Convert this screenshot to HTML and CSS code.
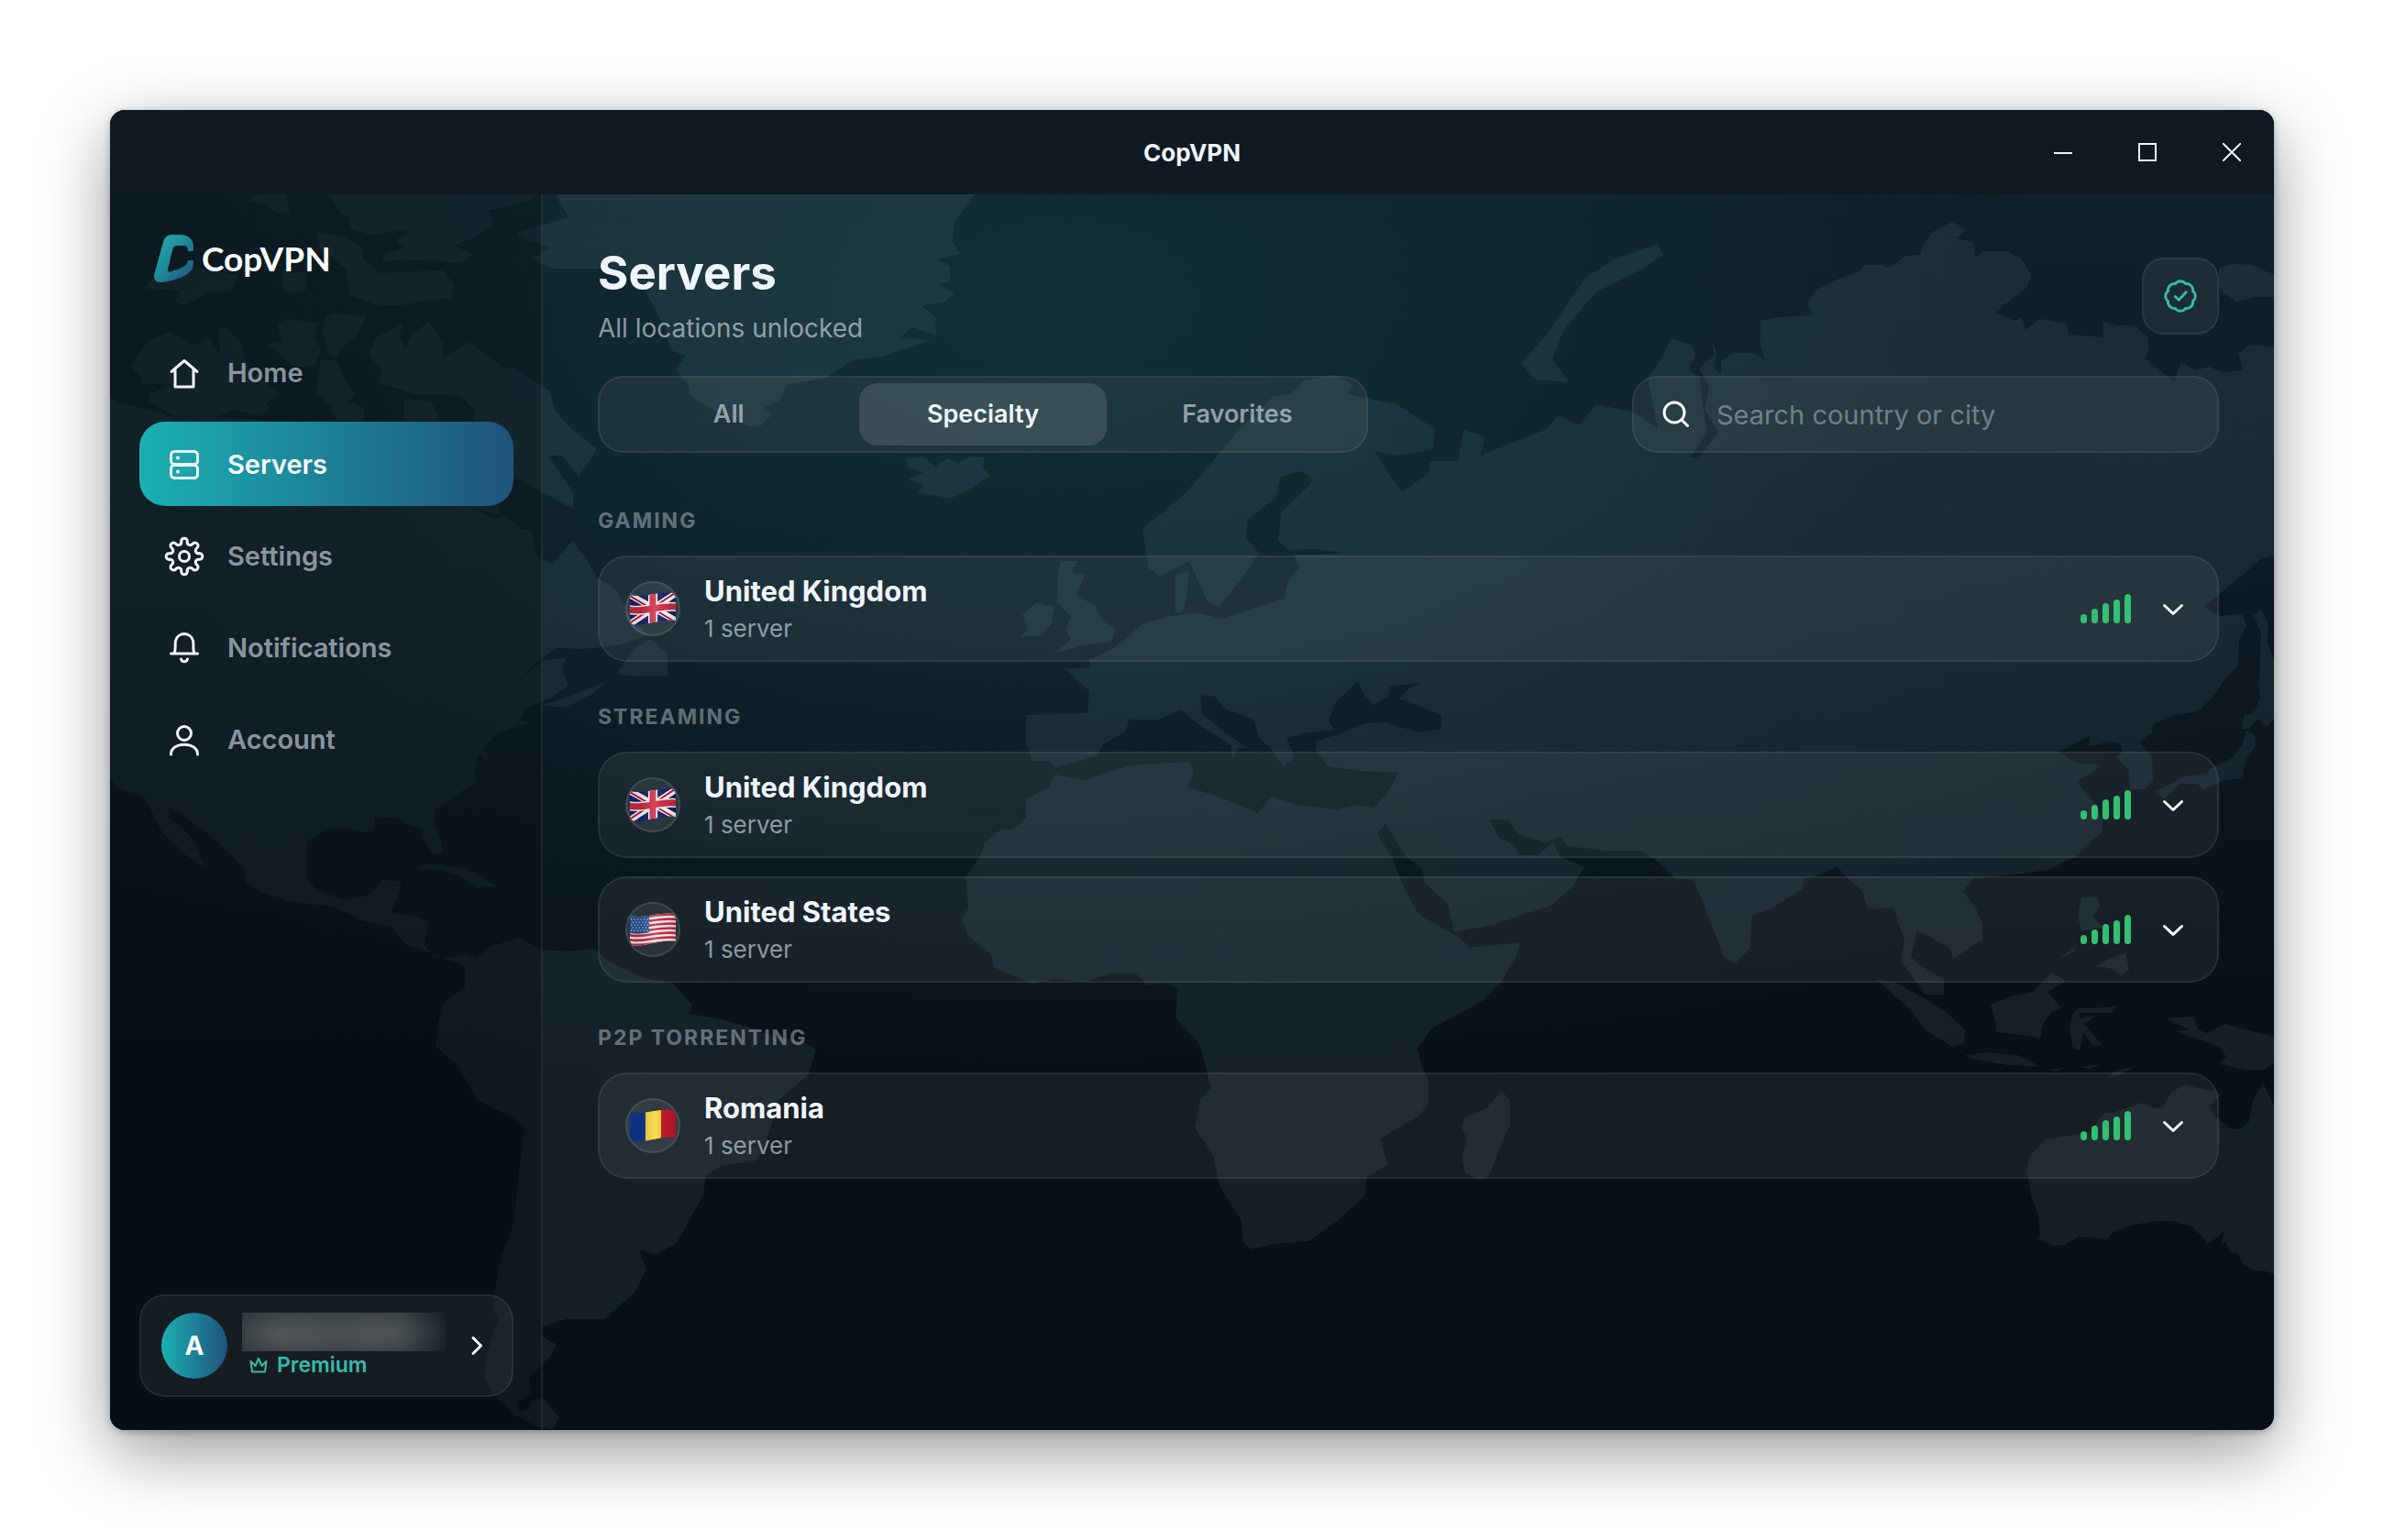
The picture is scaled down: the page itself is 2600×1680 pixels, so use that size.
FILE: index.html
```html
<!DOCTYPE html>
<html lang="en">
<head>
<meta charset="utf-8">
<title>CopVPN</title>
<link rel="stylesheet" href="styles.css">
</head>
<body>
<svg class="sprite" aria-hidden="true">
  <defs>
    <linearGradient id="brand" x1="0" y1="0" x2="1" y2="1"><stop offset="0" stop-color="#20b5b5"/><stop offset=".45" stop-color="#1f8c9b"/><stop offset="1" stop-color="#1f4f7a"/></linearGradient>
    <linearGradient id="fold" x1="0" y1="0" x2="1" y2="0"><stop offset="0" stop-color="#000" stop-opacity=".12"/><stop offset=".25" stop-color="#000" stop-opacity=".14"/><stop offset=".55" stop-color="#fff" stop-opacity=".14"/><stop offset=".8" stop-color="#000" stop-opacity=".04"/><stop offset="1" stop-color="#000" stop-opacity=".16"/></linearGradient>
    <clipPath id="cloth"><path d="M0 4C14 8 32-1 50 2V32C34 29 16 39 0 36Z"/></clipPath>
    <path id="wave" d="M-1 4C14 8 32-1 51 2"/>
    <path id="tooth" d="M-3.22-16.18C-3.8-21 3.8-21 3.22-16.18C2.79-12.57 6.92-10.86 9.16-13.72"/>
    <path id="scallop" d="M-5.9-14.2A7.4 7.4 0 0 1 5.9-14.2"/>
  </defs>
  <symbol id="flag-gb" viewBox="0 0 50 38">
    <g clip-path="url(#cloth)">
      <path fill="#12246f" d="M0 0H50V38H0Z"/>
      <path stroke="#fff" stroke-width="7" d="M-2 3 52 33M-2 37 52 1"/>
      <path stroke="#c8102e" stroke-width="2" d="M-2 4 25 20M52 35 25 19M-2 36 25 18M52 0 25 18"/>
      <g fill="none" stroke="#fff" stroke-width="10"><path d="M25 0V38"/><path d="M-1 20C14 24 32 15 51 17"/></g>
      <g fill="none" stroke="#d22b45" stroke-width="7"><path d="M25 0V38"/><path d="M-1 20C14 24 32 15 51 17"/></g>
      <path fill="url(#fold)" d="M0 0H50V38H0Z"/>
    </g>
  </symbol>
  <symbol id="flag-us" viewBox="0 0 50 38">
    <g clip-path="url(#cloth)">
      <path fill="#f4f4f6" d="M0 0H50V38H0Z"/>
      <g fill="none" stroke="#c9283c" stroke-width="2.6">
        <use href="#wave" y="1"/><use href="#wave" y="6"/><use href="#wave" y="11"/><use href="#wave" y="16"/><use href="#wave" y="21"/><use href="#wave" y="26"/><use href="#wave" y="31"/>
      </g>
      <path fill="#2b5797" d="M0 0H21V22C14 24 7 24 0 23Z"/>
      <g fill="none" stroke="#a9c3e2" stroke-width="1.3" stroke-dasharray="1.3 2.2"><path d="M1 8H21M2.7 11H21M1 14H21M2.7 17H21M1 20H21"/></g>
      <path fill="url(#fold)" d="M0 0H50V38H0Z"/>
    </g>
  </symbol>
  <symbol id="flag-ro" viewBox="0 0 50 38">
    <g clip-path="url(#cloth)">
      <path fill="#0f3a94" d="M0 0H17V38H0Z"/><path fill="#fbd936" d="M17 0H34V38H17Z"/><path fill="#c4182d" d="M34 0H50V38H34Z"/>
      <path fill="url(#fold)" d="M0 0H50V38H0Z"/>
    </g>
  </symbol>
  <symbol id="chevron-down" viewBox="0 0 36 36"><path d="M8.500 14.500 18 23.500 27.500 14.500" fill="none" stroke="currentColor" stroke-width="3" stroke-linecap="round" stroke-linejoin="round"/></symbol>
</svg>

<div class="window">
  <header class="titlebar">
    <span class="titlebar-name">CopVPN</span>
    <div class="window-controls">
      <button type="button" aria-label="Minimize"><svg viewBox="0 0 20 20"><path d="M0 11H20"/></svg></button>
      <button type="button" aria-label="Maximize"><svg viewBox="0 0 20 20"><path d="M1 1H19V19H1Z"/></svg></button>
      <button type="button" aria-label="Close"><svg viewBox="0 0 20 20"><path d="M0 0 20 20M20 0 0 20"/></svg></button>
    </div>
  </header>

  <div class="body">
    <svg class="world" viewBox="120 212 2360 1348" preserveAspectRatio="xMidYMid slice" aria-hidden="true">
      <!-- North and South America -->
      <path d="M120 433 132 440 177 450 195 458 243 455 277 457 380 475 480 470 540 530 545 562 508 552 508 560 513 593 505 608 518 623 520 637 512 647 493 657 502 679 492 697 480 688 472 673 470 657 447 656 427 648 403 636 381 636 375 610 363 603 362 587 378 560 400 535 430 500 480 490 508 552 540 566 553 563 567 577 580 578 585 607 602 616 613 603 620 595 625 590 640 610 651 630 672 643 687 673 707 693 678 703 637 708 607 707 587 720 567 742 593 720 617 718 613 730 620 748 603 760 573 773 568 785 578 788 543 800 525 818 533 822 530 830 522 822 518 840 520 853 493 870 475 883 473 897 482 920 482 930 473 932 460 913 462 904 440 898 433 892 409 892 408 905 397 908 370 902 350 908 335 918 334 957 347 972 377 982 403 976 417 960 438 961 432 982 427 996 450 998 467 1005 463 1031 473 1044 490 1045 507 1041 520 1045 533 1033 567 1023 590 1036 620 1038 648 1035 664 1049 702 1067 733 1072 755 1097 751 1106 777 1110 809 1118 840 1129 876 1136 890 1145 882 1172 849 1200 842 1225 831 1258 822 1267 786 1272 769 1284 768 1302 738 1356 716 1368 697 1363 705 1385 693 1409 660 1439 617 1439 592 1447 590 1457 607 1467 600 1480 577 1503 580 1520 563 1530 567 1540 577 1537 580 1527 593 1525 610 1547 602 1559 587 1557 560 1543 540 1523 528 1503 532 1473 543 1440 537 1423 545 1380 547 1370 560 1335 567 1271 572 1232 560 1220 520 1200 500 1163 475 1141 478 1114 483 1095 507 1077 507 1053 490 1048 460 1036 443 1031 427 1011 397 1005 363 989 320 984 287 974 268 962 267 947 237 918 198 888 184 881 184 893 198 903 212 918 223 946 203 933 177 908 157 869 127 859 120 848Z"/>
      <path d="M710 697 693 707 672 735 693 738 728 737 728 713ZM590 769 612 763 640 752 661 744 648 756 617 772ZM450 950 467 942 507 947 543 967 520 968 503 956 473 947Z"/>
      <!-- Arctic islands -->
      <path d="M267 219 283 212H312L317 233 300 232 287 222ZM358 212H582L580 218 532 230 538 243 520 258 495 268 517 277 503 287 463 283 418 285V278L440 270 432 262 448 252 427 252 407 257 383 250 380 237 372 233ZM345 253 370 257 393 267 397 283 413 298 483 295 495 310 492 325 460 328 440 333H413L382 323 377 293 350 273ZM156 315 173 297 200 290 260 300 253 317 227 320 200 333 190 328 197 317ZM308 297H335L333 317 320 321 308 315ZM302 353 313 348 347 352 342 370 350 380 343 400 320 400 292 375 308 372ZM355 345 367 341 400 346 387 368 377 375 367 390 357 385 352 360ZM350 392 367 393 377 417 387 430 380 438 397 445V459H367L360 443 345 427ZM440 435 470 438 480 459H440ZM143 400 160 373 185 362 213 377 227 367 240 387 238 360 245 357 263 373 268 397 293 420 305 430 290 440 295 448 283 454 257 447 230 457 197 458 163 438V430L187 420 153 418 155 412ZM403 387 410 367 440 353 435 367 442 380 450 363 468 352 483 373V390L512 373 547 400 563 403 600 427 605 447 620 465 651 490 631 520 613 497 598 497 625 537V555L597 540 560 520 530 470 515 457 520 450 503 432 453 430 410 417 418 407Z"/>
      <path d="M608 212H1063L1042 240 1038 263 1048 277 1021 283 1036 290V307L1024 310 1041 320 1030 330 1004 333 1020 345 1021 366 995 357 982 368 1015 371 965 388 930 393 901 412 857 420 851 437 833 443 841 453 828 466 816 465 778 447 753 432 751 420 737 403 748 388 731 382 725 357 704 318 678 293H603L580 282 600 270 568 260 563 255 620 237 608 217ZM989 500 1007 498 1020 509 1033 500 1045 505 1059 498 1074 499 1072 510 1080 519 1059 533 1036 544 1000 537 1008 530 991 523 1007 515 989 509Z"/>
      <!-- British Isles and Denmark -->
      <path d="M1156 612H1175L1168 625 1183 627 1174 650 1194 660 1200 673 1217 687 1212 700 1177 705 1150 713 1168 697 1162 687 1168 673 1153 657V640ZM1130 658 1150 662 1147 680 1136 693 1112 695 1121 687 1115 670ZM1282 627 1297 623 1294 650 1290 668H1282Z"/>
      <!-- Europe, Asia and Africa -->
      <path d="M1455 409 1476 420 1470 430 1523 441 1565 468 1563 490 1523 497 1499 492 1517 521 1529 537 1559 515V503H1590L1596 468 1620 477 1614 497 1687 468 1699 454 1723 463 1741 441 1783 450 1808 468 1797 412 1812 391 1822 370 1844 375 1849 387 1842 404 1854 412 1857 442 1862 471 1844 499H1853L1874 471 1859 446 1864 422 1853 402 1869 387 1867 370 1872 385 1870 402 1877 408V393L1892 385H1912L1925 393 1920 377V350L1939 346 1977 344 1971 330 1981 316 2006 304 2027 297 2033 289H2051L2061 292 2078 279 2094 278 2098 265 2108 253 2129 242 2144 251 2133 260 2152 264 2154 281 2164 274H2190L2205 283 2215 300 2210 314 2175 341 2197 350 2205 346 2209 360 2225 348 2254 353 2256 365 2294 368V351L2309 355H2327L2342 367 2344 381 2339 391 2371 416 2379 395 2394 404 2409 400 2424 406 2446 404 2441 385 2454 376 2480 379V606L2466 610 2404 662 2421 672 2446 669 2450 683 2442 699 2441 726 2424 744 2414 760 2397 776 2373 780 2348 790 2347 799 2333 809 2347 826 2348 851 2340 861H2322V840L2308 826 2315 820 2312 811 2300 809 2278 815 2280 802 2245 820 2263 832 2292 835 2265 853 2283 874 2293 893 2292 908 2263 935 2233 949 2180 956 2153 958 2141 972 2155 991 2162 1008V1025L2130 1046 2127 1035 2100 1019 2091 1015 2084 1044 2100 1057 2120 1068V1085H2100L2085 1065 2073 1048 2077 1026 2065 990 2037 992 2031 972 2014 957 2003 945 1986 954 1968 959 1965 970 1933 990 1911 999 1908 1035 1892 1052 1880 1044 1863 999 1847 959H1828L1807 939 1789 928H1751L1709 923 1702 913 1684 919 1656 910 1645 894H1624L1635 914 1652 923 1656 933H1677L1694 919 1701 934 1728 946 1714 968 1691 988 1631 1008 1586 1017 1579 986 1554 963 1551 948 1533 934 1511 898 1502 910 1519 937 1531 968 1547 997 1593 1024 1603 1034 1658 1028 1652 1046 1638 1070 1617 1092 1561 1122 1546 1144 1551 1164 1558 1178V1204L1547 1218 1505 1242 1514 1271 1491 1283 1488 1305 1456 1334 1428 1354 1389 1357 1365 1363 1356 1356 1354 1332 1330 1294 1323 1260 1303 1231 1309 1200 1321 1187 1316 1169 1309 1140 1282 1111 1284 1079 1270 1072 1251 1075 1239 1062H1210L1182 1071 1151 1068 1126 1073 1084 1055 1081 1041 1056 1021 1049 1004 1056 990 1053 957 1070 932 1074 919 1091 905H1105L1119 892V872L1144 858 1151 845 1182 851 1231 835 1298 831 1302 843 1295 858 1337 872 1372 887 1386 869 1414 878 1459 883 1477 878 1498 881 1512 867 1525 843 1484 841 1449 836 1435 820V809L1462 800 1488 789 1512 788 1547 799 1572 795V780L1526 762 1537 751 1552 744 1516 749 1514 760 1498 769 1488 758 1481 743 1456 767 1449 787 1456 796 1421 800 1403 805 1412 825 1400 837 1388 820 1372 803 1368 785 1337 774 1326 760 1309 758 1312 780 1337 800 1361 816 1350 816 1344 829 1342 812 1302 787 1288 774 1263 785H1231L1228 798 1203 812 1196 825 1151 837 1144 830H1126L1119 812V780L1186 778 1188 754 1160 729 1188 728V720L1215 707 1247 680 1273 673 1303 668 1332 675 1370 663 1400 653 1405 633 1417 620 1411 605H1435L1464 603 1435 599 1405 600 1394 590 1397 560 1430 527V520L1417 514 1397 520 1391 543 1361 567 1359 587 1373 603 1353 633 1329 662 1317 657 1297 612 1265 628 1253 620 1246 577 1294 537 1353 467 1388 433 1408 430 1423 415Z"/>
      <path d="M1659 396 1687 365 1729 303 1762 282 1808 266 1814 278 1790 294 1741 318 1705 361 1693 392 1711 417 1674 414ZM2420 292 2436 288 2456 289 2480 300V324H2461L2438 329 2420 314ZM2466 665 2474 680 2472 700 2480 720V740L2472 752 2464 748 2466 691 2458 671ZM2463 740H2480V784L2472 793 2462 784 2453 795H2445L2447 780 2458 778 2465 761ZM2450 797 2459 801 2460 813 2450 828 2445 849 2423 852 2403 862 2397 855H2377L2360 872 2350 864 2383 847 2407 844 2413 836 2433 828 2445 813Z"/>
      <!-- South-East Asia -->
      <path d="M2270 979 2287 978 2291 989 2282 1000 2295 1012 2270 1015 2266 1000ZM2285 1054 2300 1046 2318 1040 2322 1058 2313 1064 2300 1056ZM2245 1047 2265 1030 2262 1038ZM2171 1096 2190 1088 2217 1082 2237 1061 2253 1070 2233 1082 2248 1100 2237 1104 2228 1117 2225 1133 2213 1130 2177 1126 2176 1113ZM2047 1069 2066 1071 2100 1090 2122 1104 2143 1123 2142 1138 2130 1142 2100 1124 2084 1102ZM2143 1151 2167 1148 2200 1151 2227 1164 2190 1162 2150 1155ZM2235 1167 2255 1164 2240 1169ZM2265 1164 2292 1161 2280 1166ZM2298 1176 2307 1168 2330 1163 2313 1172ZM2260 1107 2267 1100 2300 1099 2310 1096 2303 1105 2267 1105 2268 1111 2287 1107 2273 1117 2293 1140 2283 1141 2272 1127 2268 1146 2261 1144 2257 1123ZM2362 1111 2393 1109 2397 1123 2407 1127 2427 1117 2480 1131V1159L2470 1167H2450L2420 1161 2428 1153 2420 1142 2387 1130 2373 1125 2387 1123Z"/>
      <!-- Madagascar and Australia -->
      <path d="M1637 1190 1647 1200V1227L1635 1254 1624 1284 1614 1287 1598 1280 1594 1262 1600 1242 1594 1231 1598 1218 1621 1209ZM2225 1347 2222 1352 2240 1359 2252 1358 2267 1349 2298 1352 2305 1344 2323 1337 2350 1332H2368L2390 1338 2405 1353 2407 1358 2426 1343 2422 1360 2427 1354 2432 1366 2440 1367 2447 1380 2460 1386 2473 1387 2480 1391V1206L2468 1181 2457 1200 2453 1223 2443 1232 2432 1231 2416 1218 2410 1207 2423 1193 2383 1183 2367 1192 2359 1208 2350 1209 2335 1203 2307 1213 2293 1215 2280 1235 2230 1243 2213 1262 2210 1277 2215 1303 2222 1323Z"/>
    </svg>

    <aside class="sidebar">
      <a class="logo" href="#home" aria-label="CopVPN">
        <svg viewBox="0 0 44 52" aria-hidden="true"><path fill="url(#brand)" d="M10 8C12 2 15 0 21 0H29C37 0 43 5 43 13V18H37C37 14 36 12 32 12H26C22 12 21 13 20 17L15 38C14.500 40 16 41 18 40.500C27 38 35 35 36 31C36.500 29 37 28 39 28H43V32C43 37 40 40 36 43C28 48 18 51 8 52C2 52 0 49 0 44Z"/></svg>
        <span>CopVPN</span>
      </a>
      <nav class="nav" aria-label="Main">
        <a class="nav-item" href="#home"><svg viewBox="0 0 48 48"><path d="M10 23.500 24 11.500 38 23.500M14 21V40H34V21"/></svg>Home</a>
        <a class="nav-item nav-item-active" href="#servers" aria-current="page"><svg viewBox="0 0 48 48"><rect x="9.500" y="10.500" width="29" height="14" rx="4"/><rect x="9.500" y="25.500" width="29" height="14" rx="4"/><path stroke-width="4" d="M17 17.500h.01M17 32.500h.01"/></svg>Servers</a>
        <a class="nav-item" href="#settings"><svg viewBox="-24 -25 48 48"><circle r="5.500"/><use href="#tooth"/><use href="#tooth" transform="rotate(45)"/><use href="#tooth" transform="rotate(90)"/><use href="#tooth" transform="rotate(135)"/><use href="#tooth" transform="rotate(180)"/><use href="#tooth" transform="rotate(225)"/><use href="#tooth" transform="rotate(270)"/><use href="#tooth" transform="rotate(315)"/></svg>Settings</a>
        <a class="nav-item" href="#notifications"><svg viewBox="0 0 48 48"><path d="M9.500 31H38.500M13 31C15 27 13.500 21 14.500 17A9.800 9.800 0 0 1 33.500 17C34.500 21 33 27 35 31M20.500 37A3.600 3.600 0 0 0 27.500 37"/></svg>Notifications</a>
        <a class="nav-item" href="#account"><svg viewBox="0 0 48 48"><circle cx="24" cy="18" r="7.500"/><path d="M9.500 41C9.500 26.500 38.500 26.500 38.500 41"/></svg>Account</a>
      </nav>
      <button class="profile" type="button" aria-label="Account, Premium">
        <span class="avatar">A</span>
        <span class="profile-text">
          <span class="profile-name"></span>
          <span class="profile-plan"><svg viewBox="0 0 20 18"><path d="M1.500 5 3 16.500H17L18.500 5 13.500 10 10 2 6.500 10Z"/></svg>Premium</span>
        </span>
        <svg class="profile-arrow" viewBox="0 0 36 36"><path d="M14 9.500 22.500 18 14 26.500"/></svg>
      </button>
    </aside>

    <main class="content">
      <header class="page-head">
        <div>
          <h1>Servers</h1>
          <p>All locations unlocked</p>
        </div>
        <button class="badge" type="button" aria-label="Subscription active"><svg viewBox="-20 -20 40 40"><use href="#scallop"/><use href="#scallop" transform="rotate(45)"/><use href="#scallop" transform="rotate(90)"/><use href="#scallop" transform="rotate(135)"/><use href="#scallop" transform="rotate(180)"/><use href="#scallop" transform="rotate(225)"/><use href="#scallop" transform="rotate(270)"/><use href="#scallop" transform="rotate(315)"/><path d="M-6 .5-2 4.500 6.500-4.500"/></svg></button>
      </header>

      <div class="toolbar">
        <div class="tabs" role="tablist">
          <button type="button" role="tab" aria-selected="false">All</button>
          <button type="button" role="tab" aria-selected="true">Specialty</button>
          <button type="button" role="tab" aria-selected="false">Favorites</button>
        </div>
        <label class="search">
          <svg viewBox="0 0 36 36" aria-hidden="true"><circle cx="16" cy="16" r="11"/><path d="M24 24 30.500 30.500"/></svg>
          <input type="search" placeholder="Search country or city" aria-label="Search country or city">
        </label>
      </div>

      <div class="groups">
        <section>
          <h2>Gaming</h2>
          <ul>
            <li><button class="server" type="button" aria-expanded="false">
              <span class="flag"><svg><use href="#flag-gb"/></svg></span>
              <span class="server-text"><strong>United Kingdom</strong><span>1 server</span></span>
              <span class="signal"><i></i><i></i><i></i><i></i><i></i></span>
              <svg class="chevron"><use href="#chevron-down"/></svg>
            </button></li>
          </ul>
        </section>
        <section>
          <h2>Streaming</h2>
          <ul>
            <li><button class="server" type="button" aria-expanded="false">
              <span class="flag"><svg><use href="#flag-gb"/></svg></span>
              <span class="server-text"><strong>United Kingdom</strong><span>1 server</span></span>
              <span class="signal"><i></i><i></i><i></i><i></i><i></i></span>
              <svg class="chevron"><use href="#chevron-down"/></svg>
            </button></li>
            <li><button class="server" type="button" aria-expanded="false">
              <span class="flag"><svg><use href="#flag-us"/></svg></span>
              <span class="server-text"><strong>United States</strong><span>1 server</span></span>
              <span class="signal"><i></i><i></i><i></i><i></i><i></i></span>
              <svg class="chevron"><use href="#chevron-down"/></svg>
            </button></li>
          </ul>
        </section>
        <section>
          <h2>P2P Torrenting</h2>
          <ul>
            <li><button class="server" type="button" aria-expanded="false">
              <span class="flag"><svg><use href="#flag-ro"/></svg></span>
              <span class="server-text"><strong>Romania</strong><span>1 server</span></span>
              <span class="signal"><i></i><i></i><i></i><i></i><i></i></span>
              <svg class="chevron"><use href="#chevron-down"/></svg>
            </button></li>
          </ul>
        </section>
      </div>
    </main>
  </div>
</div>
</body>
</html>
```
FILE: styles.css
```css
* { box-sizing: border-box; }

:root {
  --text: #f0f5fd;
  --muted: rgba(233, 240, 250, .58);
  --faint: rgba(233, 240, 250, .4);
  --panel: rgba(255, 255, 255, .06);
  --line: rgba(255, 255, 255, .07);
  --accent: #2fbfa9;
  --green: #30c172;
  --brand: linear-gradient(90deg, #1bb0b3, #1f527b);
}

body {
  margin: 0;
  min-height: 100vh;
  padding: 120px;
  display: flex;
  background: #fff;
  color: var(--text);
  font-family: Inter, sans-serif;
}

button, input { font: inherit; color: inherit; border: 0; background: none; padding: 0; }
h1, h2, p, ul { margin: 0; padding: 0; }
ul { list-style: none; }
a { color: inherit; text-decoration: none; }
svg { display: block; flex: none; }
.sprite { position: absolute; width: 0; height: 0; }

.window {
  flex: 1;
  display: flex;
  flex-direction: column;
  border-radius: 16px;
  overflow: hidden;
  background: #070e15;
  box-shadow: 0 24px 76px rgba(0, 0, 0, .4), 0 2px 8px rgba(0, 0, 0, .25);
}

.titlebar {
  display: grid;
  grid-template-columns: 1fr auto 1fr;
  align-items: center;
  height: 92px;
  background: #0f1922;
}
.titlebar-name { grid-column: 2; font-size: 26px; font-weight: 700; }
.window-controls { display: flex; justify-content: flex-end; }
.window-controls button { display: grid; place-items: center; width: 92px; height: 92px; }
.window-controls svg { width: 20px; height: 20px; fill: none; stroke: var(--text); stroke-width: 2; }

.body {
  position: relative;
  isolation: isolate;
  flex: 1;
  display: flex;
  background:
    radial-gradient(ellipse 62% 68% at 44% 9%, #102e35 0, rgba(15, 42, 49, .8) 35%, rgba(12, 32, 39, .4) 68%, rgba(8, 16, 22, 0) 100%),
    linear-gradient(#11212b 0, #0c1720 40%, #080f16 70%);
}
.world {
  position: absolute;
  inset: 0;
  z-index: -1;
  width: 100%;
  height: 100%;
  fill: rgba(134, 174, 184, .1);
}

.sidebar {
  flex: none;
  display: flex;
  flex-direction: column;
  width: 472px;
  padding: 40px 30px 36px 32px;
  border-right: 2px solid rgba(255, 255, 255, .09);
  background: rgba(8, 14, 20, .4);
}
.logo {
  display: flex;
  align-items: center;
  gap: 8px;
  height: 60px;
  margin-bottom: 48px;
  padding-left: 16px;
  font: 700 37px/60px Lato, sans-serif;
  color: #fff;
}
.logo svg { width: 44px; height: 52px; }
.nav { display: flex; flex-direction: column; gap: 8px; margin-bottom: auto; }
.nav-item {
  display: flex;
  align-items: center;
  gap: 23px;
  height: 92px;
  padding: 0 25px;
  border-radius: 28px;
  font-size: 29px;
  font-weight: 600;
  color: var(--muted);
}
.nav-item svg {
  width: 48px;
  height: 48px;
  fill: none;
  stroke: var(--text);
  stroke-width: 3;
  stroke-linecap: round;
  stroke-linejoin: round;
}
.nav-item-active { background: var(--brand); color: #fff; }

.profile {
  display: flex;
  align-items: center;
  gap: 16px;
  height: 112px;
  padding: 0 20px 0 22px;
  border: 2px solid var(--line);
  border-radius: 28px;
  background: var(--panel);
  text-align: left;
}
.avatar {
  display: grid;
  place-items: center;
  width: 72px;
  height: 72px;
  border-radius: 50%;
  background: var(--brand);
  font-size: 28px;
  font-weight: 700;
  color: #fff;
}
.profile-text { flex: 1; }
.profile-name {
  display: block;
  width: 222px;
  height: 42px;
  background:
    radial-gradient(ellipse 30% 80% at 18% 55%, rgba(255, 255, 255, .1), transparent),
    radial-gradient(ellipse 30% 80% at 73% 50%, rgba(255, 255, 255, .1), transparent),
    radial-gradient(ellipse 60% 90% at 45% 55%, rgba(255, 255, 255, .1), transparent),
    linear-gradient(90deg, rgba(255, 255, 255, .1), rgba(255, 255, 255, .13) 45%, rgba(255, 255, 255, .1) 80%, rgba(255, 255, 255, .02));
}
.profile-plan {
  display: flex;
  align-items: center;
  gap: 10px;
  padding-left: 8px;
  font-size: 23px;
  line-height: 30px;
  font-weight: 600;
  color: var(--accent);
}
.profile-plan svg { width: 20px; height: 18px; fill: none; stroke: currentColor; stroke-width: 2; stroke-linejoin: round; }
.profile-arrow { width: 36px; height: 36px; fill: none; stroke: #fff; stroke-width: 3; stroke-linecap: round; stroke-linejoin: round; }

.content { flex: 1; min-width: 0; padding: 56px 60px; }
.page-head { display: flex; align-items: center; justify-content: space-between; margin-bottom: 32px; }
h1 { font-size: 51px; line-height: 60px; font-weight: 700; margin-bottom: 10px; }
.page-head p { font-size: 28px; line-height: 40px; color: var(--muted); }
.badge {
  display: grid;
  place-items: center;
  width: 84px;
  height: 84px;
  border: 2px solid var(--line);
  border-radius: 24px;
  background: var(--panel);
}
.badge svg { width: 38px; height: 38px; fill: none; stroke: var(--accent); stroke-width: 3; stroke-linecap: round; stroke-linejoin: round; }

.toolbar { display: flex; justify-content: space-between; gap: 40px; margin-bottom: 56px; }
.tabs {
  display: grid;
  grid-template-columns: repeat(3, 1fr);
  gap: 8px;
  width: 840px;
  height: 84px;
  padding: 6px;
  border: 2px solid var(--line);
  border-radius: 28px;
  background: var(--panel);
}
.tabs button { padding-bottom: 2px; border-radius: 20px; font-size: 27px; font-weight: 600; color: var(--muted); }
.tabs button[aria-selected="true"] { background: rgba(255, 255, 255, .12); color: var(--text); }
.search {
  display: flex;
  align-items: center;
  gap: 26px;
  width: 640px;
  height: 84px;
  padding: 0 28px;
  border: 2px solid var(--line);
  border-radius: 28px;
  background: var(--panel);
}
.search svg { width: 36px; height: 36px; fill: none; stroke: #fff; stroke-width: 3; stroke-linecap: round; }
.search input { flex: 1; min-width: 0; outline: 0; font-size: 29px; }
.search input::placeholder { color: var(--faint); opacity: 1; }

.groups { display: flex; flex-direction: column; gap: 44px; }
h2 {
  margin-bottom: 22px;
  font-size: 23px;
  line-height: 32px;
  font-weight: 700;
  letter-spacing: 2px;
  text-transform: uppercase;
  color: var(--faint);
}
.toolbar + .groups { padding-top: 2px; }
.groups ul { display: flex; flex-direction: column; gap: 20px; }
.server {
  display: flex;
  align-items: center;
  width: 100%;
  height: 116px;
  padding: 0 30px 0 28px;
  border: 2px solid var(--line);
  border-radius: 32px;
  background: var(--panel);
  text-align: left;
}
.flag {
  display: grid;
  place-items: center;
  width: 60px;
  height: 60px;
  border: 2px solid rgba(255, 255, 255, .1);
  border-radius: 50%;
  overflow: hidden;
  background: rgba(255, 255, 255, .08);
}
.flag svg { width: 50px; height: 38px; }
.server-text { flex: 1; display: flex; flex-direction: column; padding: 2px 0 0 26px; }
.server-text strong { font-size: 31px; line-height: 42px; font-weight: 700; }
.server-text span { font-size: 26px; line-height: 40px; color: var(--muted); }
.signal { display: flex; align-items: flex-end; gap: 5px; height: 32px; margin-right: 28px; }
.signal i { width: 7px; height: 32px; border-radius: 4px; background: var(--green); }
.signal i:nth-child(1) { height: 10px; }
.signal i:nth-child(2) { height: 16px; }
.signal i:nth-child(3) { height: 22px; }
.signal i:nth-child(4) { height: 26px; }
.chevron { width: 36px; height: 36px; color: #fff; }
```
